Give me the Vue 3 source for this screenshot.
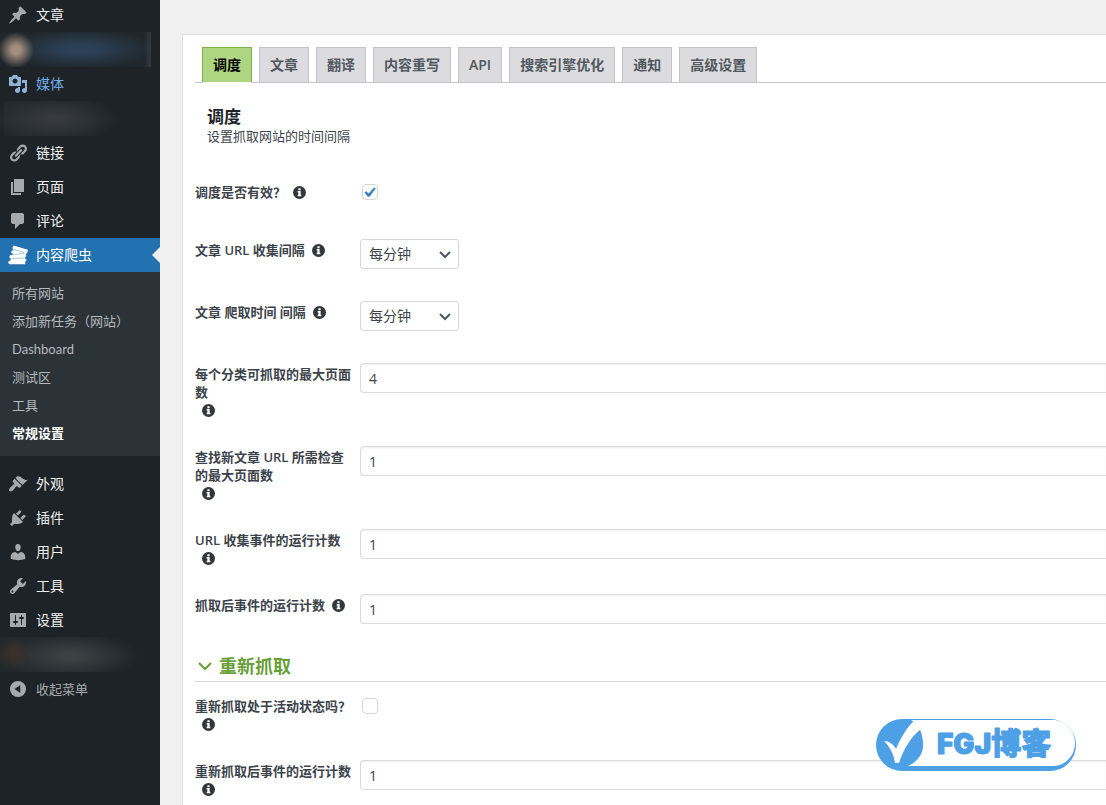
<script setup>
import { ref } from 'vue'

const icons = {
  post: 'M10.44 3.02l1.82-1.82 6.36 6.35-1.83 1.82c-1.05-.68-2.48-.57-3.41.36l-.75.75c-.92.93-1.04 2.35-.35 3.41l-1.83 1.82-2.41-2.41-2.8 2.79c-.42.42-3.38 2.71-3.8 2.29s1.86-3.39 2.28-3.81l2.79-2.79L4.1 9.36l1.83-1.82c1.05.69 2.48.57 3.4-.36l.75-.75c.93-.92 1.05-2.35.36-3.41z',
  media: 'M13 11V4c0-.55-.45-1-1-1h-1.67L9 1H5L3.67 3H2c-.55 0-1 .45-1 1v7c0 .55.45 1 1 1h10c.55 0 1-.45 1-1zM7 4.5c1.38 0 2.5 1.12 2.5 2.5S8.38 9.5 7 9.5 4.5 8.38 4.5 7 5.62 4.5 7 4.5zM14 6h5v10.5c0 1.38-1.12 2.5-2.5 2.5S14 17.88 14 16.5s1.12-2.5 2.5-2.5c.17 0 .34.02.5.05V9h-3V6zm-4 8.05V13h2v3.5c0 1.38-1.12 2.5-2.5 2.5S7 17.88 7 16.5 8.12 14 9.5 14c.17 0 .34.02.5.05z',
  links: 'M17.74 2.76c1.68 1.69 1.68 4.41 0 6.1l-1.53 1.52c-1.12 1.12-2.7 1.47-4.14 1.09l2.62-2.61.76-.77.76-.76c.84-.84.84-2.2 0-3.04-.84-.85-2.2-.85-3.04 0l-.77.76-3.38 3.38c-.37-1.44-.02-3.02 1.1-4.14l1.52-1.53c1.69-1.68 4.42-1.68 6.1 0zM8.59 13.43l5.34-5.34c.42-.42.42-1.1 0-1.52-.44-.43-1.13-.39-1.53 0l-5.33 5.34c-.42.42-.42 1.1 0 1.52.44.43 1.13.39 1.52 0zm-.76 2.29l4.14-4.15c.38 1.44.03 3.02-1.09 4.14l-1.52 1.53c-1.69 1.68-4.41 1.68-6.1 0-1.68-1.68-1.68-4.42 0-6.1l1.53-1.52c1.12-1.12 2.7-1.47 4.14-1.1l-4.14 4.15c-.85.84-.85 2.2 0 3.05.84.84 2.2.84 3.04 0z',
  page: 'M6 15V2h10v13H6zm-1 1h8v2H3V5h2v11z',
  comments: 'M5 2h9c1.1 0 2 .9 2 2v7c0 1.1-.9 2-2 2h-2l-5 5v-5H5c-1.1 0-2-.9-2-2V4c0-1.1.9-2 2-2z',
  crawler: 'M5.5.6l7.6 2.2 6.9 2-.9 3.500-1.200.4.5 2.600-1.700 1 .3 1.200 1.300.5v1.800l-1 .5v2.900H1.600L0 17.700l.9-1.800 1.600-.3.3-2.300-1.400-.4.3-2.400 2.300-.7 2.300-.5-3.100-1.200.5-2.500 2-.4L4.400 3z',
  appearance: 'M14.48 11.06L7.41 3.99l1.5-1.5c.5-.56 2.3-.47 3.51.32 1.21.8 1.43 1.28 2.91 2.1 1.18.64 2.45 1.26 4.45.85zm-.71.71L6.7 4.7 4.93 6.47c-.39.39-.39 1.02 0 1.41l1.06 1.06c.39.39.39 1.03 0 1.42-.6.6-1.43 1.11-2.21 1.69-.35.26-.7.53-1.01.84C1.43 14.23.4 16.08 1.4 17.07c.99 1 2.84-.03 4.18-1.36.31-.31.58-.66.85-1.02.57-.78 1.08-1.61 1.69-2.21.39-.39 1.02-.39 1.41 0l1.06 1.06c.39.39 1.02.39 1.41 0z',
  plugins: 'M13.11 4.36L9.87 7.6 8 5.73l3.24-3.24c.35-.34 1.05-.2 1.56.32.52.51.66 1.21.31 1.55zm-8 1.77l.91-1.12 9.01 9.01-1.19.84c-.71.71-2.63 1.16-3.82 1.16H6.14L4.9 17.26c-.59.59-1.54.59-2.12 0-.59-.58-.59-1.53 0-2.12l1.24-1.24v-3.88c0-1.13.4-3.19 1.09-3.89zm7.26 3.97l3.24-3.24c.34-.35 1.04-.21 1.55.31.52.51.66 1.21.31 1.55l-3.24 3.25z',
  users: 'M10 9.25c-2.27 0-2.73-3.44-2.73-3.44C7 4.02 7.82 2 9.97 2c2.16 0 2.98 2.02 2.71 3.81 0 0-.41 3.44-2.68 3.44zm0 2.57L12.72 10c2.39 0 4.52 2.33 4.52 4.53v2.49s-3.65 1.13-7.24 1.13c-3.65 0-7.24-1.13-7.24-1.13v-2.49c0-2.25 1.94-4.48 4.47-4.48z',
  tools: 'M16.68 9.77c-1.34 1.34-3.3 1.67-4.95.99l-5.41 6.52c-.99.99-2.59.99-3.58 0s-.99-2.59 0-3.57l6.52-5.42c-.68-1.65-.35-3.61.99-4.95 1.28-1.28 3.12-1.62 4.72-1.06l-2.89 2.89 2.82 2.82 2.86-2.87c.53 1.58.18 3.39-1.08 4.65zM3.81 16.21c.4.39 1.04.39 1.43 0 .4-.4.4-1.04 0-1.43-.39-.4-1.03-.4-1.43 0-.39.39-.39 1.03 0 1.43z',
  settings: 'M18 16V4c0-.55-.45-1-1-1H3c-.55 0-1 .45-1 1v12c0 .55.45 1 1 1h14c.55 0 1-.45 1-1zM8 11h1c.55 0 1 .45 1 1s-.45 1-1 1H8v1.5c0 .28-.22.5-.5.5s-.5-.22-.5-.5V13H6c-.55 0-1-.45-1-1s.45-1 1-1h1V5.5c0-.28.22-.5.5-.5s.5.22.5.5V11zm5-2h-1c-.55 0-1-.45-1-1s.45-1 1-1h1V5.5c0-.28.22-.5.5-.5s.5.22.5.5V7h1c.55 0 1 .45 1 1s-.45 1-1 1h-1v5.5c0 .28-.22.5-.5.5s-.5-.22-.5-.5V9z',
  collapse: 'M10 2a8 8 0 1 0 0 16 8 8 0 0 0 0-16zm2.300 4v8L6.500 10z',
}

const menu = [
  { label: '文章', icon: 'post' },
  { hidden: 'account' },
  { label: '媒体', icon: 'media', hover: true },
  { hidden: 'plain' },
  { label: '链接', icon: 'links' },
  { label: '页面', icon: 'page' },
  { label: '评论', icon: 'comments' },
  {
    label: '内容爬虫',
    icon: 'crawler',
    current: true,
    children: ['所有网站', '添加新任务（网站）', 'Dashboard', '测试区', '工具', '常规设置'],
  },
  { label: '外观', icon: 'appearance' },
  { label: '插件', icon: 'plugins' },
  { label: '用户', icon: 'users' },
  { label: '工具', icon: 'tools' },
  { label: '设置', icon: 'settings' },
  { hidden: 'warm' },
]

const tabs = ['调度', '文章', '翻译', '内容重写', 'API', '搜索引擎优化', '通知', '高级设置']
const activeTab = ref('调度')

const sections = ref([
  {
    rows: [
      { id: 'active', label: '调度是否有效？', type: 'checkbox', value: true },
      { id: 'collect', label: '文章 URL 收集间隔', type: 'select', value: '每分钟' },
      { id: 'crawl', label: '文章 爬取时间 间隔', type: 'select', value: '每分钟' },
      { id: 'max-category', label: '每个分类可抓取的最大页面数', type: 'text', value: '4' },
      { id: 'max-check', label: '查找新文章 URL 所需检查的最大页面数', type: 'text', value: '1' },
      { id: 'run-collect', label: 'URL 收集事件的运行计数', type: 'text', value: '1' },
      { id: 'run-crawl', label: '抓取后事件的运行计数', type: 'text', value: '1' },
    ],
  },
  {
    title: '重新抓取',
    rows: [
      { id: 'recrawl', label: '重新抓取处于活动状态吗？', type: 'checkbox', value: false },
      { id: 'run-recrawl', label: '重新抓取后事件的运行计数', type: 'text', value: '1' },
    ],
  },
])
</script>

<template>
  <div class="admin">
    <nav class="sidebar">
      <ul class="menu">
        <li v-for="(item, i) in menu" :key="i" :class="{ current: item.current }">
          <div v-if="item.hidden" class="redacted" :class="item.hidden"></div>
          <a v-else href="#" class="item" :class="{ hover: item.hover }">
            <svg viewBox="0 0 20 20" class="icon"><path fill-rule="evenodd" :d="icons[item.icon]" />
              <path v-if="item.current" class="seam" d="M6 4.500l10 2.800M7 9.500l9-1.300M4 13.500l12-.5" />
            </svg>
            <span>{{ item.label }}</span>
          </a>
          <ul v-if="item.children" class="submenu">
            <li v-for="child in item.children" :key="child">
              <a href="#" :class="{ selected: child === '常规设置' }">{{ child }}</a>
            </li>
          </ul>
        </li>
        <li>
          <button type="button" class="item collapse">
            <svg viewBox="0 0 20 20" class="icon"><path fill-rule="evenodd" :d="icons.collapse" /></svg>
            <span>收起菜单</span>
          </button>
        </li>
      </ul>
    </nav>

    <main class="content">
      <div class="card">
        <div class="tabs" role="tablist">
          <button
            v-for="tab in tabs"
            :key="tab"
            type="button"
            role="tab"
            class="tab"
            :class="{ active: tab === activeTab }"
            :aria-selected="tab === activeTab"
            @click="activeTab = tab"
          >{{ tab }}</button>
        </div>

        <header class="intro">
          <h2>调度</h2>
          <p>设置抓取网站的时间间隔</p>
        </header>

        <section v-for="(section, s) in sections" :key="s">
          <h3 v-if="section.title" class="section-title">
            <svg viewBox="0 0 14 10" class="fold"><path d="M1 2l6 6 6-6" /></svg>
            {{ section.title }}
          </h3>
          <div v-for="row in section.rows" :key="row.id" class="row">
            <div class="label">
              <label :for="row.id">{{ row.label }}</label>
              <svg viewBox="0 0 14 14" class="info">
                <circle cx="7" cy="7" r="7" />
                <path d="M5.800 2.500h2.400v2H5.800zM5 5.500h3.200v4H9V11H5V9.500h.8V7H5z" />
              </svg>
            </div>
            <div class="field">
              <input v-if="row.type === 'checkbox'" :id="row.id" v-model="row.value" type="checkbox" />
              <div v-else-if="row.type === 'select'" class="select">
                <select :id="row.id" v-model="row.value"><option>每分钟</option></select>
                <svg viewBox="0 0 12 8" class="chevron"><path d="M1 1l5 5 5-5" /></svg>
              </div>
              <input v-else :id="row.id" v-model="row.value" type="text" />
            </div>
          </div>
        </section>
      </div>
    </main>

    <svg class="watermark" viewBox="0 0 200 52">
      <rect x="0" y="0" width="200" height="52" rx="26" fill="#4d9fe6" />
      <path d="M32 47C43 42 48 33 47 23 46 12 42 5 35 1H177c12 0 22 10 22 23 0 13-10 23-22 23z" fill="#fff" />
      <path d="M8 22c5 0 9 3 12 8C25 18 31 8 39 1l6 9C35 18 28 29 23 44h-4C18 36 14 28 8 22z" fill="#fff" />
      <text x="61" y="35"><tspan class="latin">FGJ</tspan>博客</text>
    </svg>
  </div>
</template>

<style>
html,
body {
  margin: 0;
  background: #f0f0f1;
}
</style>

<style scoped>
.admin {
  position: relative;
  display: flex;
  height: 100vh;
  overflow: hidden;
  font: 13px/18px "Open Sans", "Noto Sans CJK SC", sans-serif;
  color: #3c434a;
}
ul {
  list-style: none;
  margin: 0;
  padding: 0;
}
a {
  text-decoration: none;
}
button,
input,
select {
  font: inherit;
  color: inherit;
}

.sidebar {
  flex: 0 0 160px;
  background: #1d2327;
}
.menu {
  margin-top: -2px;
}
.item {
  position: relative;
  display: flex;
  align-items: center;
  gap: 8px;
  box-sizing: border-box;
  width: 100%;
  height: 34px;
  padding: 0 8px;
  border: 0;
  background: none;
  color: #f0f0f1;
  font-size: 14px;
}
.icon {
  width: 20px;
  height: 20px;
  fill: #a7aaad;
}
.item.hover {
  color: #72aee6;
}
.item.hover .icon {
  fill: #8fb3d6;
}
.current > .item {
  background: #2271b1;
  color: #fff;
}
.current > .item::after {
  content: "";
  position: absolute;
  right: 0;
  border: 8px solid transparent;
  border-left-width: 0;
  border-right-color: #f0f0f1;
}
.current .icon {
  fill: #fff;
}
.icon .seam {
  fill: none;
  stroke: #2271b1;
  stroke-width: 0.4;
}
.item.collapse {
  color: #a7aaad;
  font-size: 13px;
}
.submenu {
  padding: 7px 0 9px;
  margin-bottom: 11px;
  background: #2c3338;
  font-family: Lato, "Noto Sans CJK SC", sans-serif;
}
.submenu a {
  display: block;
  padding: 0 12px;
  line-height: 28px;
  color: #b4b9be;
}
.submenu .selected {
  color: #fff;
  font-weight: 700;
}
.redacted {
  height: 35px;
}
.account {
  background:
    linear-gradient(90deg, transparent 144px, #363b3f 151px, transparent 151px),
    radial-gradient(circle at 16px 18px, #a58f80 4px, transparent 18px),
    radial-gradient(ellipse 75px 20px at 80px 17px, #2b4056 20%, transparent),
    linear-gradient(90deg, #20272c 151px, transparent 151px);
}
.plain {
  background:
    radial-gradient(ellipse 65px 24px at 55px 18px, #373b3f 10%, transparent),
    linear-gradient(90deg, transparent 4px, #22282c 4px, transparent 110px);
}
.warm {
  background:
    radial-gradient(circle at 14px 16px, #39302b 3px, transparent 18px),
    radial-gradient(ellipse 70px 24px at 70px 19px, #3c4144 10%, transparent),
    linear-gradient(90deg, #22282c, transparent 120px);
}

.content {
  flex: 1;
  min-width: 0;
  padding: 34px 0 0 22px;
}
.card {
  padding: 12px 0 12px 12px;
  border: 1px solid #dfe0e2;
  border-right: 0;
  background: #fff;
}
.tabs {
  display: flex;
  gap: 7px;
  padding-left: 7px;
  border-bottom: 1px solid #c3c4c7;
}
.tab {
  height: 36px;
  margin-bottom: -1px;
  padding: 0 10px;
  border: 1px solid #c3c4c7;
  background: #dcdcde;
  color: #50575e;
  font-size: 14px;
  font-weight: 600;
  white-space: nowrap;
}
.tab.active {
  border-color: #7cb342;
  border-bottom-color: #fff;
  background: #aed581;
  color: #000;
}
.intro {
  padding: 25px 12px 20px;
}
h2,
h3,
p {
  margin: 0;
}
h2 {
  color: #1d2327;
  font-size: 17px;
  line-height: 18px;
}
.intro p {
  line-height: 20px;
}
.row {
  display: grid;
  grid-template-columns: 157px 1fr;
  column-gap: 8px;
}
.label {
  padding: 17px 0 12px;
  font-weight: 600;
}
.label label {
  display: inline-block;
}
.info {
  width: 13px;
  height: 13px;
  margin-left: 7px;
  vertical-align: -2px;
  fill: #32373c;
}
.info path {
  fill: #fff;
}
.field {
  min-height: 26px;
  padding: 15px 0 17px;
}
input[type="text"] {
  display: block;
  box-sizing: border-box;
  width: 100%;
  height: 30px;
  padding: 0 8px;
  border: 1px solid #dcdcde;
  border-right: 0;
  border-radius: 4px 0 0 4px;
  box-shadow: inset 0 1px 2px rgba(0, 0, 0, 0.07);
  font-size: 14px;
}
input[type="checkbox"] {
  appearance: none;
  display: grid;
  place-items: center;
  box-sizing: border-box;
  width: 16px;
  height: 16px;
  margin: 3px 2px;
  border: 1px solid #d5d6d9;
  border-radius: 4px;
  background: #fff;
}
input[type="checkbox"]:checked::before {
  content: "";
  width: 12px;
  height: 10px;
  background: #3582c4;
  clip-path: polygon(4% 56%, 18% 42%, 38% 64%, 84% 4%, 98% 14%, 46% 98%, 32% 98%);
}
.select {
  position: relative;
  width: 99px;
}
select {
  appearance: none;
  display: block;
  width: 100%;
  height: 30px;
  padding: 0 24px 0 8px;
  border: 1px solid #d5d6d9;
  border-radius: 3px;
  background: #fff;
  font-size: 14px;
}
.chevron {
  position: absolute;
  top: 12px;
  right: 8px;
  width: 12px;
  height: 8px;
  fill: none;
  stroke: #50575e;
  stroke-width: 2;
  pointer-events: none;
}
.section-title {
  display: flex;
  align-items: center;
  gap: 7px;
  box-sizing: border-box;
  height: 41px;
  margin-bottom: -2px;
  padding: 10px 3px 0;
  border-bottom: 1px solid #d5d6d9;
  color: #689f38;
  font-size: 18px;
}
.fold {
  width: 14px;
  height: 10px;
  fill: none;
  stroke: #689f38;
  stroke-width: 2;
}
.watermark {
  position: absolute;
  right: 30px;
  bottom: 34px;
  width: 200px;
  height: 52px;
}
.watermark text {
  font: 900 30px "Noto Sans CJK SC", sans-serif;
  fill: #4d9fe6;
  stroke: #4d9fe6;
  stroke-width: 1;
  stroke-linejoin: round;
}
.watermark .latin {
  font-family: Inter, sans-serif;
  font-size: 28px;
}
</style>
